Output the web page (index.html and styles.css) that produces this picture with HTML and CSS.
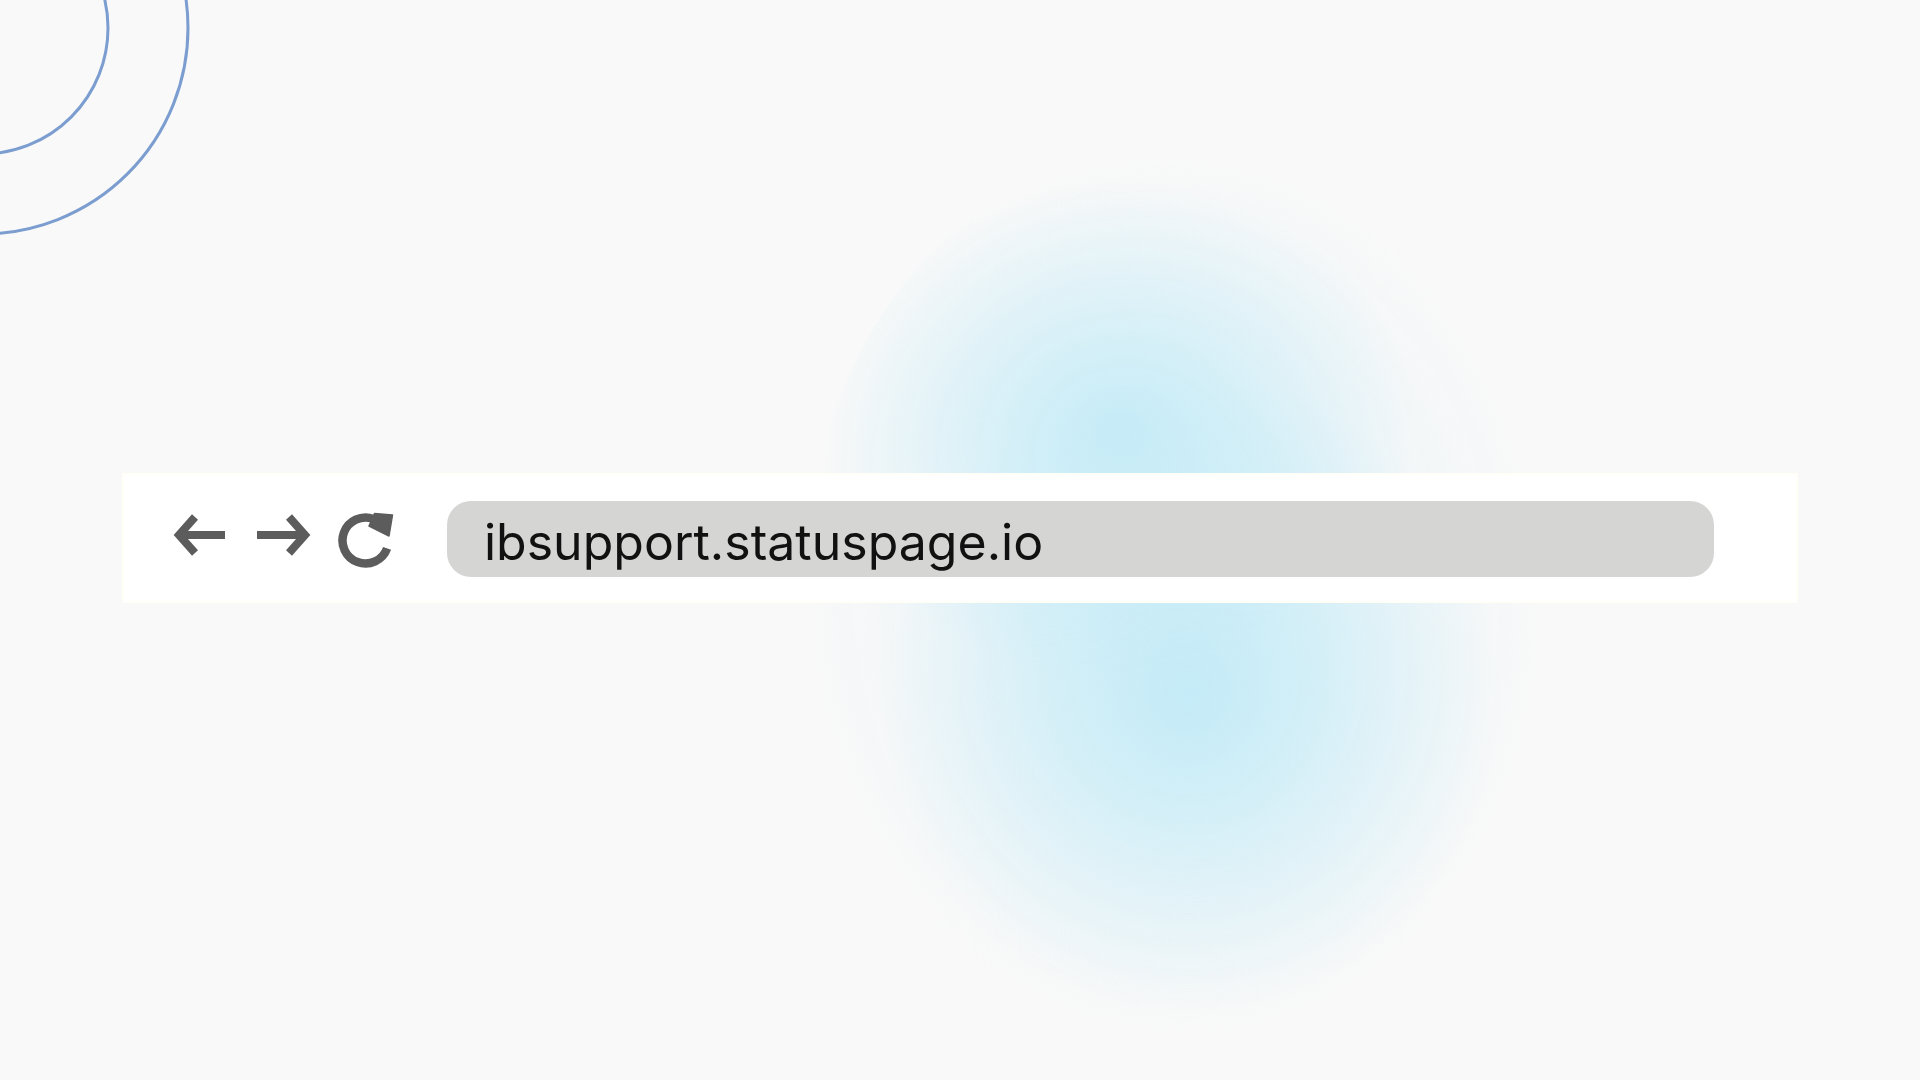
FILE: index.html
```html
<!DOCTYPE html>
<html lang="en">
<head>
<meta charset="utf-8">
<title>ibsupport.statuspage.io</title>
<link rel="stylesheet" href="styles.css">
</head>
<body>
<div class="glow"></div>
<svg class="rings" width="240" height="260" viewBox="0 0 240 260">
  <circle cx="-18" cy="28" r="126" fill="none" stroke="#7b9dcf" stroke-width="3"/>
  <circle cx="-18" cy="28" r="206" fill="none" stroke="#7b9dcf" stroke-width="3"/>
</svg>
<main class="stage">
  <div class="bar">
    <svg class="icon icon-back" width="60" height="60" viewBox="0 0 60 60">
      <path d="M7 27 H55" fill="none" stroke="#5c5c5c" stroke-width="8"/>
      <path d="M25 9 L9 27 L25 45" fill="none" stroke="#5c5c5c" stroke-width="8" stroke-linejoin="miter"/>
    </svg>
    <svg class="icon icon-fwd" width="60" height="60" viewBox="0 0 60 60">
      <path d="M3 27 H51" fill="none" stroke="#5c5c5c" stroke-width="8"/>
      <path d="M35 9 L51 27 L35 45" fill="none" stroke="#5c5c5c" stroke-width="8" stroke-linejoin="miter"/>
    </svg>
    <svg class="icon icon-reload" width="62" height="60" viewBox="0 0 62 60">
      <path d="M51.1 40.4 A23 23 0 1 1 37.4 10.9" fill="none" stroke="#5c5c5c" stroke-width="8.5"/>
      <polygon points="38.5,5.5 56.5,7 53,28 33,18" fill="#5c5c5c" stroke="#5c5c5c" stroke-width="1.5" stroke-linejoin="round"/>
    </svg>
    <div class="url">ibsupport.statuspage.io</div>
  </div>
</main>
</body>
</html>
```

FILE: styles.css
```css
html, body {
  margin: 0;
  padding: 0;
}
body {
  width: 1920px;
  height: 1080px;
  overflow: hidden;
  background: #f9f9f9;
  position: relative;
  font-family: Inter, "Noto Sans", sans-serif;
}
.glow {
  position: absolute;
  left: 805px;
  top: 150px;
  width: 740px;
  height: 890px;
  border-radius: 50%;
  background:
    radial-gradient(ellipse 40% 28% at 44% 31%, rgba(196,235,247,0.95) 0%, rgba(196,235,247,0) 100%),
    radial-gradient(ellipse 42% 36% at 51% 61%, rgba(196,235,247,1) 0%, rgba(196,235,247,0) 100%),
    radial-gradient(closest-side, rgba(214,238,246,0.85) 0%, rgba(230,242,247,0.5) 55%, rgba(249,249,249,0) 100%);
  transform: rotate(-4deg);
}
.rings {
  position: absolute;
  left: 0;
  top: 0;
}
.stage {
  position: relative;
  padding: 473px 122px 0 122px;
}
.bar {
  height: 130px;
  background: #ffffff;
  box-shadow: inset 0 0 0 2px #fffff8;
  display: flex;
  align-items: center;
  padding: 0 84px 0 48px;
}
.icon {
  display: block;
  flex: none;
}
.icon-fwd {
  margin-left: 24px;
}
.icon-reload {
  margin-left: 22px;
}
.url {
  flex: 1;
  margin-left: 49px;
  height: 76px;
  margin-top: 2px;
  box-sizing: border-box;
  border-radius: 24px;
  background: #d5d5d4;
  display: flex;
  align-items: center;
  padding: 6px 0 0 37px;
  font-size: 50px;
  color: #111111;
}
```
